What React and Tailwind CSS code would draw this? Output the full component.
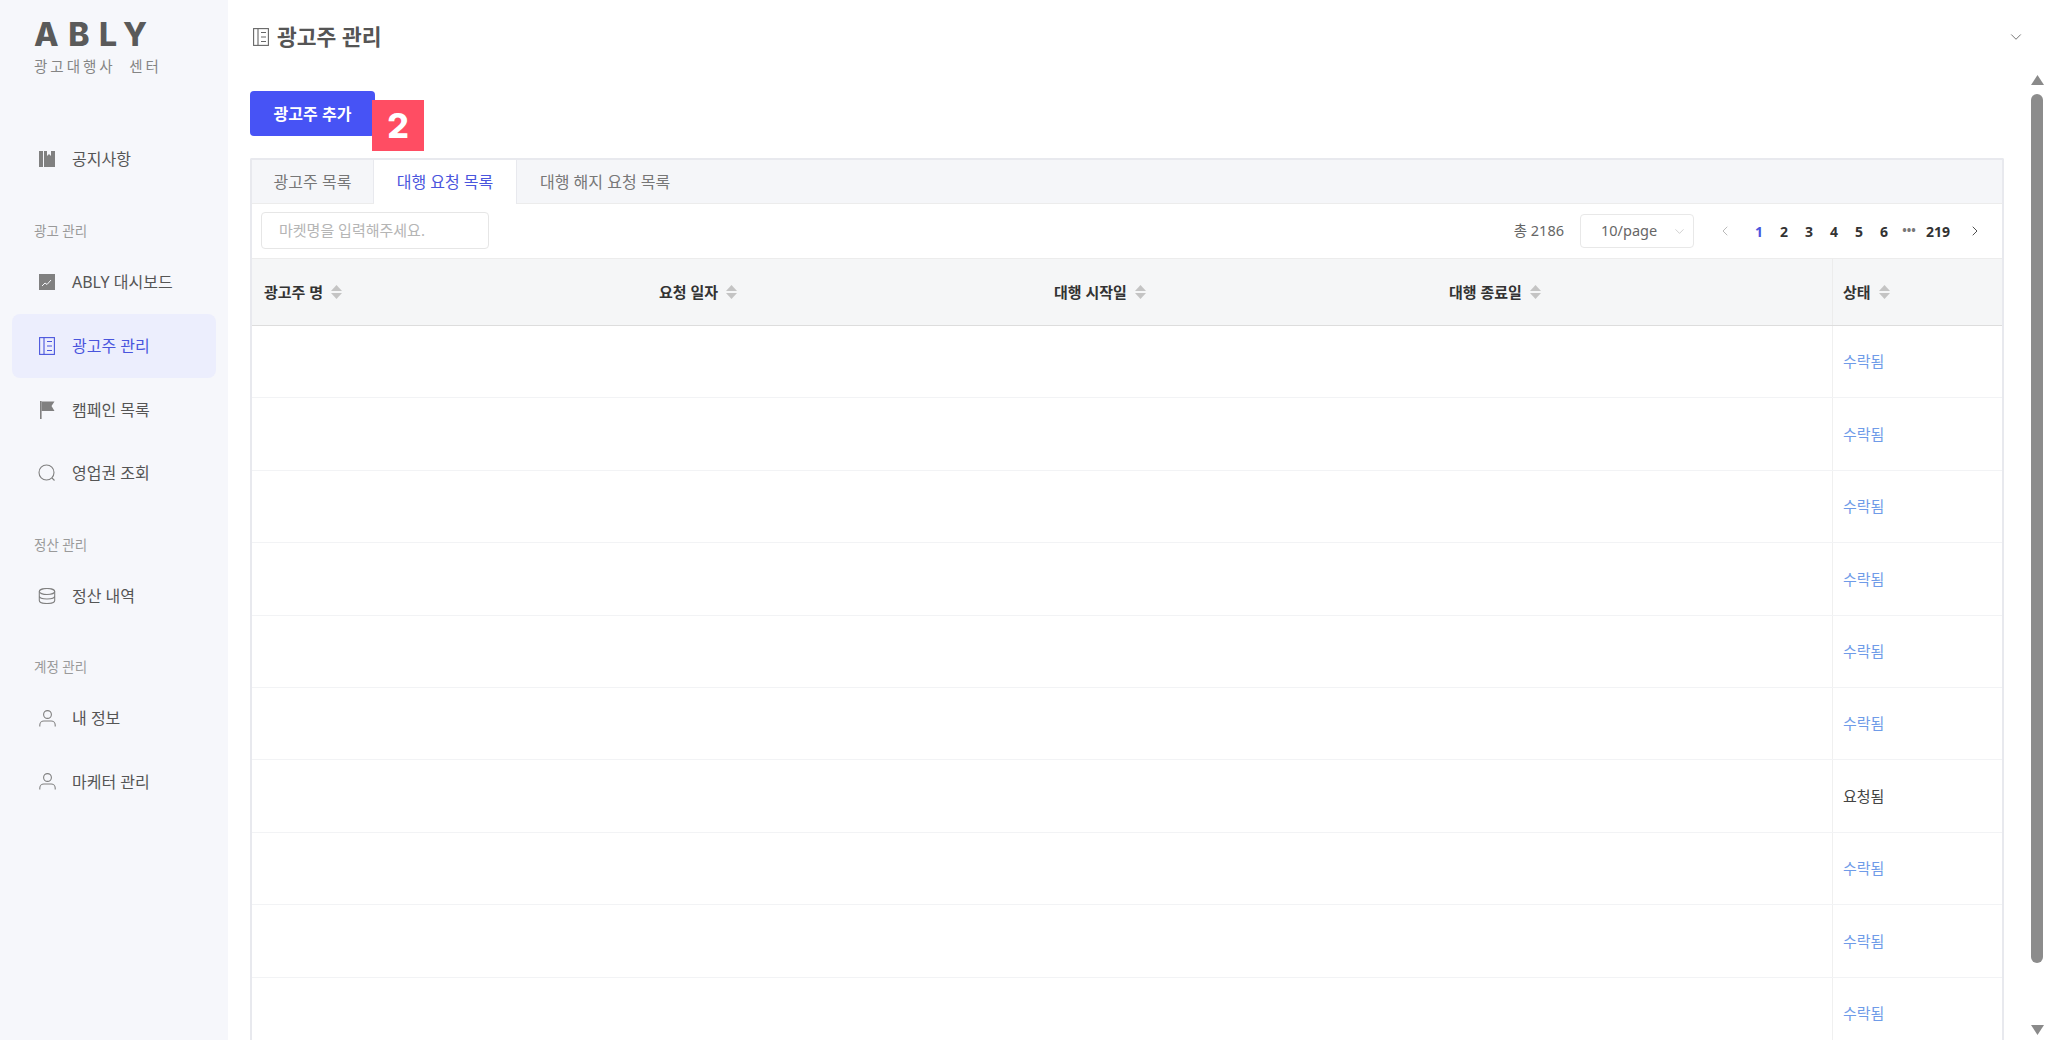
import React from 'react';
import { ChevronDown, ChevronLeft, ChevronRight } from 'lucide-react';

const FONT = { fontFamily: '"Noto Sans", "Noto Sans CJK KR", sans-serif' };

// ── Icons ────────────────────────────────────────────────────────────────
const NoticeIcon = () => (
  <svg width="16" height="16" viewBox="0 0 16 16" fill="currentColor">
    <rect x="0" y="0" width="4" height="16" />
    <path d="M5 0h3v5l2-2 2 2V0h4v16H5z" />
  </svg>
);
const ChartIcon = () => (
  <svg width="16" height="16" viewBox="0 0 16 16">
    <rect width="16" height="16" fill="currentColor" />
    <path d="M3 12l3-3 2 1.5 4-4.5" fill="none" stroke="#f6f7fb" strokeWidth="1" />
  </svg>
);
const ListIcon = ({ size = 16 }) => (
  <svg width={size} height={size + 2} viewBox="0 0 16 18" fill="none" stroke="currentColor" strokeWidth="1.1">
    <rect x="0.6" y="0.6" width="14.8" height="16.8" />
    <path d="M5 0.6v16.8M8 4.5h5M8 9h5M8 13.5h5" />
  </svg>
);
const FlagIcon = () => (
  <svg width="16" height="18" viewBox="0 0 16 18" fill="currentColor">
    <rect x="1" y="0" width="1.6" height="18" />
    <path d="M2.6 0.5H15.5L12.5 5l3 5H2.6z" />
  </svg>
);
const SearchIcon = () => (
  <svg width="18" height="18" viewBox="0 0 18 18" fill="none" stroke="currentColor" strokeWidth="1.1">
    <circle cx="8.5" cy="8.5" r="7.5" />
    <path d="M14 14l2.5 2.5" />
  </svg>
);
const DbIcon = () => (
  <svg width="18" height="16" viewBox="0 0 18 16" fill="none" stroke="currentColor" strokeWidth="1.1">
    <ellipse cx="9" cy="3.5" rx="7.7" ry="3" />
    <path d="M1.3 3.5v9c0 1.7 3.4 3 7.7 3s7.7-1.3 7.7-3v-9M1.3 8c0 1.7 3.4 3 7.7 3s7.7-1.3 7.7-3" />
  </svg>
);
const UserIcon = () => (
  <svg width="17" height="17" viewBox="0 0 17 17" fill="none" stroke="currentColor" strokeWidth="1.1">
    <circle cx="8.5" cy="4.5" r="3.9" />
    <path d="M0.8 16.5v-1.5c0-2.4 2-4 4-4h7.4c2 0 4 1.6 4 4v1.5" />
  </svg>
);
const SortCaret = () => (
  <svg width="11" height="14" viewBox="0 0 11 14" fill="#c4c4c4" className="ml-[8px] shrink-0">
    <path d="M5.5 0L11 6H0z" />
    <path d="M5.5 14L0 8h11z" />
  </svg>
);

// ── Sidebar ──────────────────────────────────────────────────────────────
const NavItem = ({ icon, label, active }) => (
  <div className={`h-[63.6px] mx-[12px] pl-[26px] rounded-[8px] flex items-center ${active ? 'bg-[#eceefd] text-[#4a55dd]' : 'text-[#555555]'}`}>
    <span className={`w-[18px] flex justify-center ${active ? 'text-[#4a55dd]' : 'text-[#808080]'}`}>{icon}</span>
    <span className="ml-[16px] text-[16px] leading-none">{label}</span>
  </div>
);
const NavLabel = ({ children }) => (
  <div className="h-[38px] pl-[34px] flex items-center text-[13.5px] text-[#9a9a9a]">{children}</div>
);

const Sidebar = () => (
  <aside className="w-[228px] shrink-0 h-full bg-[#f6f7fb]">
    <div className="h-[127px] pl-[34px] pt-[16px]">
      <div className="text-[32px] leading-[38px] font-extrabold tracking-[9.5px] text-[#5a5a5a]" style={{ fontFamily: '"Inter", sans-serif' }}>ABLY</div>
      <div className="mt-[2px] text-[14.5px] leading-[20px] tracking-[3px] text-[#858585] whitespace-pre">광고대행사  센터</div>
    </div>
    <NavItem icon={<NoticeIcon />} label="공지사항" />
    <div className="mt-[22px]"><NavLabel>광고 관리</NavLabel></div>
    <NavItem icon={<ChartIcon />} label="ABLY 대시보드" />
    <NavItem icon={<ListIcon />} label="광고주 관리" active />
    <NavItem icon={<FlagIcon />} label="캠페인 목록" />
    <NavItem icon={<SearchIcon />} label="영업권 조회" />
    <div className="mt-[21px]"><NavLabel>정산 관리</NavLabel></div>
    <NavItem icon={<DbIcon />} label="정산 내역" />
    <div className="mt-[21px]"><NavLabel>계정 관리</NavLabel></div>
    <NavItem icon={<UserIcon />} label="내 정보" />
    <NavItem icon={<UserIcon />} label="마케터 관리" />
  </aside>
);

// ── Table ────────────────────────────────────────────────────────────────
const COLUMNS = ['광고주 명', '요청 일자', '대행 시작일', '대행 종료일'];
const ROWS = ['수락됨', '수락됨', '수락됨', '수락됨', '수락됨', '수락됨', '요청됨', '수락됨', '수락됨', '수락됨'];
const PAGES = ['1', '2', '3', '4', '5', '6'];

const Toolbar = () => (
  <div className="h-[55px] pl-[9px] pr-[19px] flex items-center border-b border-[#ececec]">
    <div className="w-[228px] h-[37px] -mt-[2px] pl-[17px] flex items-center border border-[#e6e6e6] rounded-[4px] text-[15px] text-[#b5b5b5]">마켓명을 입력해주세요.</div>
    <div className="ml-auto text-[14.5px] text-[#666666]">총 2186</div>
    <div className="ml-[16px] w-[114px] h-[34px] pl-[20px] pr-[6px] flex items-center justify-between border border-[#e8e8e8] rounded-[4px] text-[14.5px] text-[#666666]">
      10/page
      <ChevronDown size={15} strokeWidth={1} className="text-[#b5b5b5]" />
    </div>
    <ChevronLeft size={16} strokeWidth={1.2} className="ml-[23px] text-[#a8a8a8]" />
    <div className="ml-[13.5px] flex items-center text-[14px] font-bold text-[#333333]">
      {PAGES.map((p) => (
        <span key={p} className={`w-[25px] text-center ${p === '1' ? 'text-[#4a55dd]' : ''}`}>{p}</span>
      ))}
      <span className="w-[25px] text-center text-[#777777] text-[12px]">•••</span>
      <span className="w-[33px] text-center">219</span>
    </div>
    <ChevronRight size={16} strokeWidth={1.4} className="ml-[12.5px] text-[#444444]" />
  </div>
);

const Table = () => (
  <div>
    <div className="h-[67px] flex bg-[#f5f6f7] border-b border-[#dddddd]">
      {COLUMNS.map((c) => (
        <div key={c} className="w-[395px] pl-[12px] flex items-center text-[15px] font-bold text-[#333333]">
          {c}<SortCaret />
        </div>
      ))}
      <div className="flex-1 pl-[10px] flex items-center text-[15px] font-bold text-[#333333] border-l border-[#ececec]">
        상태<SortCaret />
      </div>
    </div>
    {ROWS.map((status, i) => (
      <div key={i} className="h-[72.4px] flex border-b border-[#f2f3f5]">
        <div className="w-[1580px]" />
        <div className={`flex-1 pl-[10px] flex items-center text-[15px] border-l border-[#f0f0f0] ${status === '수락됨' ? 'text-[#6f9be8]' : 'text-[#444444]'}`}>
          {status}
        </div>
      </div>
    ))}
  </div>
);

const Scrollbar = () => (
  <div className="w-[17px] shrink-0 h-full pt-[75px] pb-[5px] pr-[5px] flex flex-col items-center">
    <svg width="13" height="10" viewBox="0 0 13 10" fill="#8a8a8a"><path d="M6.5 0L13 10H0z" /></svg>
    <div className="mt-[9px] w-[12px] h-[869px] rounded-[6px] bg-[#8c8c8c]" />
    <svg width="13" height="10" viewBox="0 0 13 10" fill="#8a8a8a" className="mt-auto"><path d="M6.5 10L0 0h13z" /></svg>
  </div>
);

export default function App() {
  return (
    <div className="w-[2048px] h-[1040px] flex overflow-hidden bg-white" style={FONT}>
      <Sidebar />
      <main className="flex-1 min-w-0 h-full pl-[22px] pr-[10px]">
        <div className="h-[74px] pl-[3px] flex items-center text-[#555555]">
          <span className="text-[#666666] flex"><ListIcon /></span>
          <span className="ml-[8px] text-[21.5px] font-bold">광고주 관리</span>
          <ChevronDown size={18} strokeWidth={1.2} className="ml-auto -mr-[4px] text-[#666666]" />
        </div>
        <div className="h-[84px] flex items-start pt-[17px]">
          <button className="w-[125px] h-[45px] rounded-[4px] bg-[#4753f5] text-white text-[16px] font-bold">광고주 추가</button>
          <span className="relative -ml-[3px] mt-[9px] w-[52px] h-[51px] bg-[#ff4d63] text-white text-[34px] leading-[51px] font-extrabold text-center" style={{ fontFamily: '"Inter", sans-serif' }}>2</span>
        </div>
        <div className="w-[1754px] h-[900px] overflow-hidden border-x-2 border-t-2 border-[#e8e9ee] rounded-t-[2px]">
          <div className="h-[44px] flex bg-[#f5f6f9] text-[16px] text-[#777777] border-b border-[#ececec]">
            <div className="w-[122px] flex items-center justify-center border-r border-[#e8e9ee]">광고주 목록</div>
            <div className="w-[143px] -mb-px flex items-center justify-center bg-white text-[#4a55dd] border-r border-[#e8e9ee]">대행 요청 목록</div>
            <div className="pl-[23px] flex items-center">대행 해지 요청 목록</div>
          </div>
          <Toolbar />
          <Table />
        </div>
      </main>
      <Scrollbar />
    </div>
  );
}
